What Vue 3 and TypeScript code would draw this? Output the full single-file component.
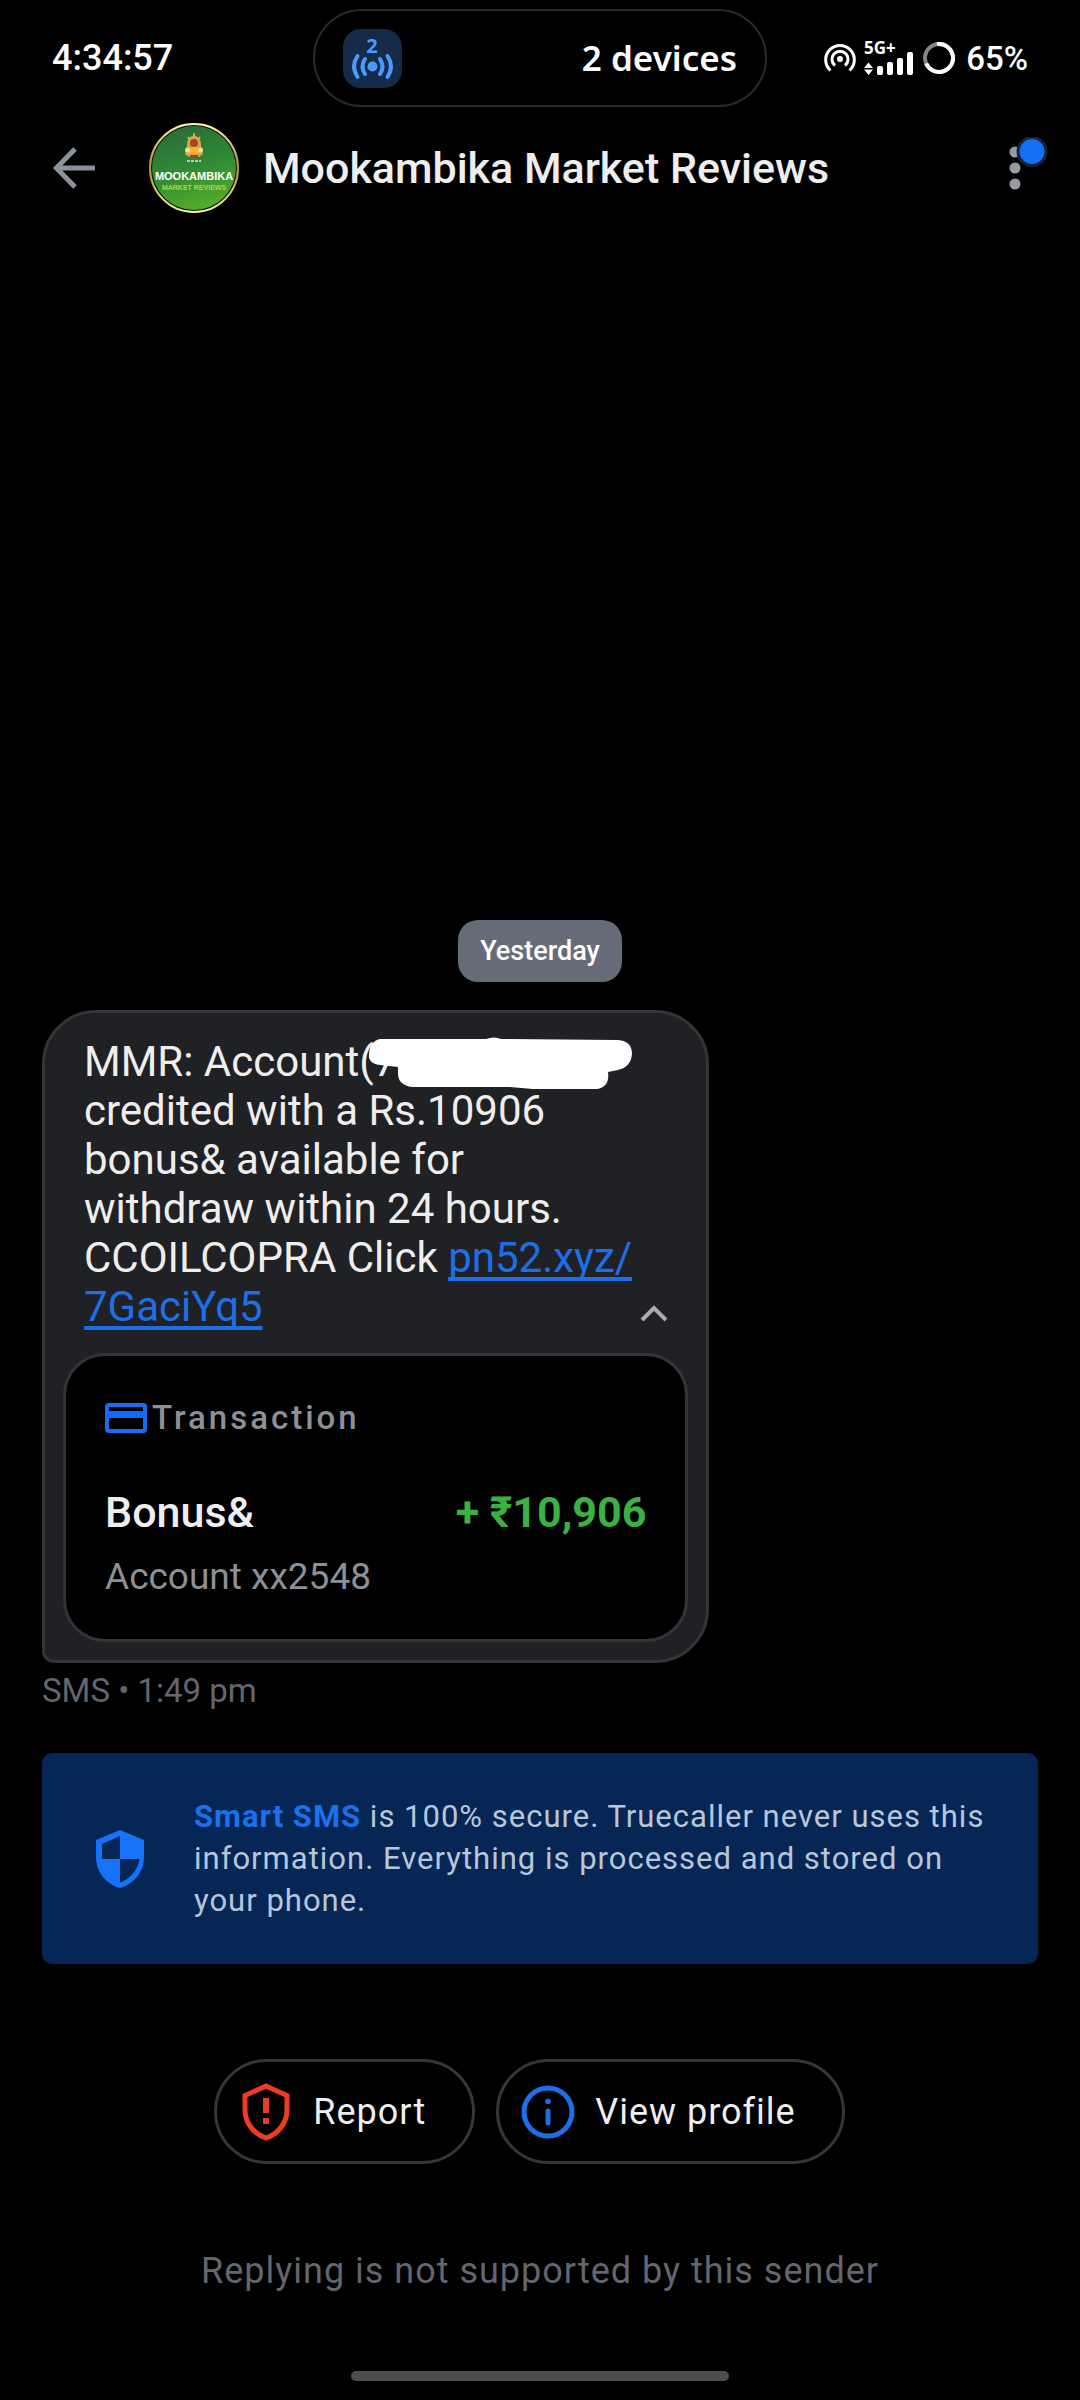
<script setup lang="ts">
interface Action {
  id: string
  label: string
}

const sender = 'Mookambika Market Reviews'
const actions: Action[] = [
  { id: 'report', label: 'Report' },
  { id: 'profile', label: 'View profile' },
]
const transaction = {
  kind: 'Transaction',
  title: 'Bonus&',
  amount: '+ ₹10,906',
  account: 'Account xx2548',
}
</script>

<template>
  <div class="screen">
    <div class="status">
      <time class="clock">4:34:57</time>
      <div class="island">
        <svg class="chip" viewBox="0 0 59 59" aria-hidden="true">
          <rect width="59" height="59" rx="18" fill="#142b49" />
          <text x="29" y="24" class="chip-num">2</text>
          <circle cx="29.500" cy="37.500" r="5" fill="#4d9aff" />
          <g fill="none" stroke="#4d9aff" stroke-width="4" stroke-linecap="round">
            <path d="M22 30Q17 37.500 22 45M37 30Q42 37.500 37 45" />
            <path d="M14.500 27Q7.500 37.500 14.500 48M44.500 27Q51.500 37.500 44.500 48" />
          </g>
        </svg>
        <span class="devices">2 devices</span>
      </div>
      <div class="indicators">
        <svg width="32" height="32" viewBox="0 0 32 32" aria-hidden="true">
          <circle cx="16" cy="17" r="3" fill="#fff" />
          <g fill="none" stroke="#fff" stroke-width="3">
            <path d="M6.500 28.500A14.300 14.300 0 1 1 25.500 28.500" />
            <path d="M11 23.500A8 8 0 1 1 21 23.500" />
          </g>
        </svg>
        <svg width="49" height="36" viewBox="0 0 49 36" aria-hidden="true" class="signal">
          <text x="0" y="14" class="net">5G+</text>
          <g fill="#fff">
            <path d="M0 28L4.500 22.500L9 28ZM0 29.500H9L4.500 35Z" />
            <rect x="13" y="26" width="6" height="9" rx="2" />
            <rect x="23" y="22" width="6" height="13" rx="2" />
            <rect x="33" y="18" width="6" height="17" rx="2" />
            <rect x="43" y="12" width="6" height="23" rx="2" />
          </g>
        </svg>
        <svg width="32" height="32" viewBox="0 0 32 32" aria-hidden="true" class="ring">
          <circle cx="16" cy="16" r="14" fill="none" stroke="#858585" stroke-width="4" />
          <path d="M14 2.100A14 14 0 1 1 3.200 21.500" fill="none" stroke="#fff" stroke-width="4" />
        </svg>
        <span class="battery">65%</span>
      </div>
    </div>

    <header class="bar">
      <button class="icon-btn" type="button" aria-label="Back">
        <svg width="42" height="42" viewBox="0 0 42 42" aria-hidden="true">
          <path d="M22 2L3.500 21L22 40M3.500 21H42" fill="none" stroke="#8b929c" stroke-width="5" />
        </svg>
      </button>
      <svg class="avatar" viewBox="0 0 90 90" role="img" aria-label="Mookambika">
        <defs>
          <linearGradient id="leaf" x1="0.300" y1="0" x2="0.600" y2="1">
            <stop offset="0" stop-color="#2a6c38" />
            <stop offset="0.500" stop-color="#2f8a35" />
            <stop offset="1" stop-color="#56ad2a" />
          </linearGradient>
          <linearGradient id="gold" x1="0" y1="0" x2="0" y2="1">
            <stop offset="0" stop-color="#fff3b0" />
            <stop offset="0.500" stop-color="#b98b3c" />
            <stop offset="1" stop-color="#fdf0a4" />
          </linearGradient>
        </defs>
        <circle cx="45" cy="45" r="44" fill="#0b1a0b" stroke="url(#gold)" stroke-width="2" />
        <circle cx="45" cy="45" r="42" fill="url(#leaf)" />
        <path d="M38 23Q37 15 45 12Q53 15 52 23L54 31L50 34H40L36 31Z" fill="#d9a441" />
        <path d="M45 10V14M39 14L41 17M51 14L49 17" stroke="#e0b65a" stroke-width="1.500" />
        <circle cx="45" cy="20" r="4" fill="#a8442a" />
        <path d="M40 27L43 24H47L50 27V31H40Z" fill="#f4b62c" />
        <circle cx="38.500" cy="27" r="2.500" fill="#f1dcae" />
        <circle cx="51.500" cy="27" r="2.500" fill="#f1dcae" />
        <path d="M41 33H49" stroke="#b53a25" stroke-width="2" />
        <path d="M38 38H52" stroke="#dfe8d8" stroke-width="1.500" stroke-dasharray="3 1" />
        <text x="45" y="57" class="brand">MOOKAMBIKA</text>
        <text x="45" y="67" class="brand-sub">MARKET REVIEWS</text>
      </svg>
      <h1 class="title">{{ sender }}</h1>
      <button class="icon-btn" type="button" aria-label="More options">
        <svg width="46" height="62" viewBox="0 0 46 62" aria-hidden="true">
          <g fill="#969ba3">
            <circle cx="13" cy="15" r="5.500" />
            <circle cx="13" cy="31" r="5.500" />
            <circle cx="13" cy="47" r="5.500" />
          </g>
          <circle cx="30" cy="14.500" r="14" fill="#1471f5" stroke="#16243a" stroke-width="3" />
        </svg>
      </button>
    </header>

    <main class="thread">
      <span class="day">Yesterday</span>

      <article class="bubble">
        <div class="body">
          <p class="text">
            MMR: Account(<span class="hidden">7<svg viewBox="0 0 264 52" aria-hidden="true">
              <path
                d="M1 21Q0 5 12 2H118Q126 -1 133 2L250 3Q264 4 264 17Q263 30 250 33L240 35Q242 50 229 52H165L142 50H44Q31 48 30 38V30L12 28Q3 27 1 21Z"
                fill="#fff"
              /></svg></span>
            credited with a Rs.10906 bonus&amp; available for withdraw within 24 hours. CCOILCOPRA Click
            <a href="#">pn52.xyz/<wbr />7GaciYq5</a>
          </p>
          <button class="icon-btn fold" type="button" aria-label="Collapse">
            <svg width="28" height="18" viewBox="0 0 28 18" aria-hidden="true">
              <path d="M2 16L14 4L26 16" fill="none" stroke="#a9abb0" stroke-width="4" />
            </svg>
          </button>
        </div>
        <section class="card">
          <div class="kind">
            <svg width="42" height="30" viewBox="0 0 42 30" aria-hidden="true">
              <rect x="2" y="2" width="38" height="26" rx="2" fill="none" stroke="#1a6df0" stroke-width="4" />
              <rect x="2" y="8" width="38" height="7" fill="#0f6bff" />
            </svg>
            <span>{{ transaction.kind }}</span>
          </div>
          <div class="row">
            <strong class="name">{{ transaction.title }}</strong>
            <strong class="amount">{{ transaction.amount }}</strong>
          </div>
          <div class="account">{{ transaction.account }}</div>
        </section>
      </article>
      <div class="meta">SMS • 1:49 pm</div>

      <aside class="secure">
        <svg width="48" height="58" viewBox="0 0 48 58" aria-hidden="true">
          <path
            d="M24 0L48 10V27C48 42 38 54 24 58C10 54 0 42 0 27V10Z M24 6L6 14V29H24Z M24 29V52.500C34 49 42 40 43.500 29Z"
            fill="#1672f8"
            fill-rule="evenodd"
          />
        </svg>
        <p>
          <b>Smart SMS</b> is 100% secure. Truecaller never uses this information. Everything is
          processed and stored on your phone.
        </p>
      </aside>

      <div class="actions">
        <button v-for="a in actions" :key="a.id" class="pill" type="button">
          <svg v-if="a.id === 'report'" width="54" height="58" viewBox="0 0 54 58" aria-hidden="true">
            <path
              d="M27 3L48 12.500V27C48 40 39 51 27 55C15 51 6 40 6 27V12.500Z"
              fill="none"
              stroke="#ee3b24"
              stroke-width="5"
            />
            <path d="M27 15V30M27 35V41" stroke="#ee3b24" stroke-width="6" />
          </svg>
          <svg v-else width="54" height="58" viewBox="0 0 54 58" aria-hidden="true">
            <circle cx="27" cy="29" r="24" fill="none" stroke="#1d6fe8" stroke-width="5" />
            <circle cx="27" cy="18.500" r="2.800" fill="#1d6fe8" />
            <path d="M27 28V40" stroke="#1d6fe8" stroke-width="5" stroke-linecap="round" />
          </svg>
          <span>{{ a.label }}</span>
        </button>
      </div>
    </main>

    <footer class="foot">
      <p>Replying is not supported by this sender</p>
      <div class="home"></div>
    </footer>
  </div>
</template>

<style>
body {
  background: #000;
}
</style>

<style scoped>
.screen {
  display: flex;
  flex-direction: column;
  box-sizing: border-box;
  min-height: 100vh;
  padding-bottom: 19px;
  background: #000;
  color: #eeeeee;
  font-family: Roboto, "Noto Sans", sans-serif;
}
svg {
  display: block;
  flex: none;
}
p,
h1 {
  margin: 0;
}
.icon-btn {
  display: block;
  padding: 0;
  border: 0;
  background: none;
  cursor: pointer;
}

.status {
  display: grid;
  grid-template-columns: 1fr 454px 1fr;
  align-items: center;
  padding: 9px 52px 0;
  color: #fff;
}
.clock {
  font-size: 36px;
  font-weight: 500;
}
.island {
  display: flex;
  align-items: center;
  justify-content: space-between;
  box-sizing: border-box;
  height: 98px;
  padding: 0 28px;
  border: 2px solid #292929;
  border-radius: 49px;
}
.chip {
  width: 59px;
  height: 59px;
}
.chip-num {
  fill: #4d9aff;
  font: 700 20px "Noto Sans", sans-serif;
  text-anchor: middle;
}
.devices {
  font: 600 35px/48px "Noto Sans", sans-serif;
}
.indicators {
  display: flex;
  align-items: center;
  justify-content: flex-end;
}
.signal {
  margin: 0 10px 0 8px;
  overflow: visible;
}
.net {
  fill: #fff;
  font: 700 17px "Noto Sans", sans-serif;
}
.battery {
  margin-left: 11px;
  font-size: 33px;
  font-weight: 500;
}

.bar {
  display: flex;
  align-items: center;
  padding: 16px 32px 0 53px;
}
.avatar {
  width: 90px;
  height: 90px;
  margin: 0 24px 0 54px;
}
.brand {
  fill: #fff;
  font: 700 11px "Liberation Sans", sans-serif;
  text-anchor: middle;
}
.brand-sub {
  fill: #a8d84a;
  font: 700 7px "Liberation Sans", sans-serif;
  text-anchor: middle;
}
.title {
  flex: 1;
  font-size: 43px;
  font-weight: 500;
  line-height: 50px;
}

.thread {
  display: flex;
  flex: 1;
  flex-direction: column;
  justify-content: flex-end;
  padding: 0 42px;
}
.day {
  align-self: center;
  margin-bottom: 28px;
  padding: 0 22px;
  border-radius: 20px;
  background: #666c77;
  color: #fff;
  font-size: 27px;
  font-weight: 500;
  line-height: 62px;
}
.bubble {
  box-sizing: border-box;
  width: 67%;
  padding: 24px 18px 18px;
  border: 3px solid #333436;
  border-radius: 54px 54px 54px 12px;
  background: #202124;
}
.body {
  display: flex;
  align-items: flex-end;
  gap: 4px;
  padding: 0 20px 22px 21px;
}
.text {
  flex: 1;
  font-size: 42px;
  line-height: 49px;
}
.text a {
  color: #1e6fe6;
  text-decoration-skip-ink: none;
  text-underline-offset: 5px;
}
/* Reserves the width of the painted-over account number */
.hidden {
  position: relative;
  display: inline-block;
  width: 256px;
}
.hidden svg {
  position: absolute;
  top: 0;
  left: -6px;
  width: 264px;
  height: 52px;
  overflow: visible;
}
.fold {
  margin-bottom: 9px;
}
.card {
  padding: 43px 39px 41px;
  border: 3px solid #333436;
  border-radius: 42px;
  background: #000;
}
.kind {
  display: flex;
  align-items: center;
  gap: 5px;
  color: #8d9096;
  font-size: 33px;
  font-weight: 500;
  line-height: 38px;
  letter-spacing: 3px;
}
.row {
  display: flex;
  justify-content: space-between;
  margin-top: 50px;
  font-size: 43px;
  line-height: 50px;
}
.name {
  font-weight: 500;
}
.amount {
  color: #3bb143;
  font-weight: 700;
}
.account {
  margin-top: 19px;
  color: #8d9096;
  font-size: 37px;
  line-height: 42px;
}
.meta {
  margin-top: 9px;
  color: #63666e;
  font-size: 33px;
  line-height: 38px;
}
.secure {
  display: flex;
  align-items: center;
  margin-top: 43px;
  padding: 43px 40px 42px 54px;
  border-radius: 10px;
  background: #062756;
  color: #b9c6da;
  font-size: 31px;
  line-height: 42px;
}
.secure p {
  margin-left: 50px;
  letter-spacing: 1px;
}
.secure b {
  color: #1c70ec;
  font-weight: 700;
}
.actions {
  display: flex;
  justify-content: center;
  margin-top: 95px;
}
.pill {
  display: flex;
  align-items: center;
  gap: 20px;
  height: 105px;
  margin-right: 21px;
  padding: 0 46px 0 22px;
  border: 3px solid #363636;
  border-radius: 53px;
  background: #000;
  color: #eeeeee;
  font: 400 36px Roboto, sans-serif;
  letter-spacing: 1px;
  cursor: pointer;
}
.foot {
  display: flex;
  flex-direction: column;
  align-items: center;
  gap: 79px;
  padding-top: 86px;
  color: #63666e;
  font-size: 36px;
  line-height: 42px;
  letter-spacing: 1px;
}
.home {
  width: 35%;
  height: 10px;
  border-radius: 5px;
  background: #4d4d4d;
}
</style>
